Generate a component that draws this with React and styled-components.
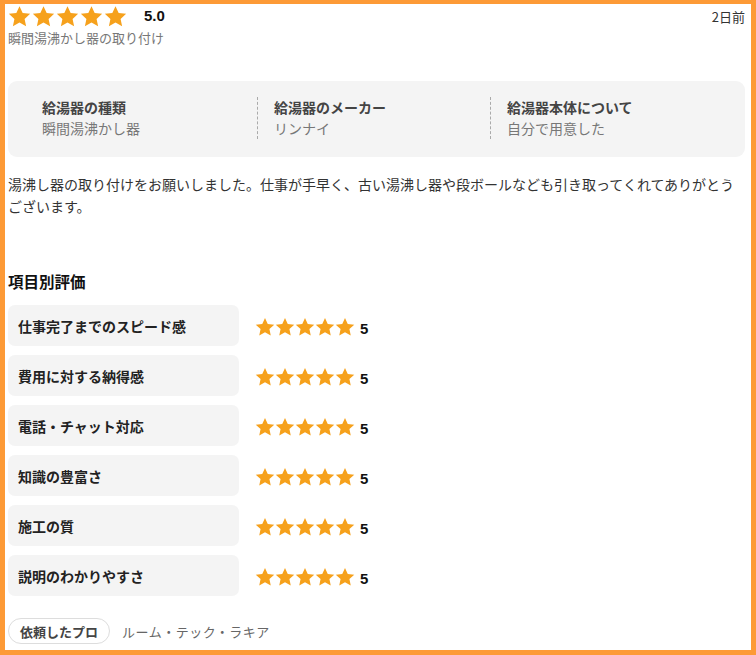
import React from "react";
import styled, { createGlobalStyle } from "styled-components";

const Global = createGlobalStyle`
  html, body { margin: 0; padding: 0; background: #fff; }
  body { font-family: "Noto Sans CJK JP", "Noto Sans", sans-serif; color: #333; }
  * { box-sizing: border-box; }
`;

const Frame = styled.div`
  width: 756px;
  height: 655px;
  border-style: solid;
  border-color: #fd9a36;
  border-width: 4px 5px 5px 5px;
  padding: 1px 6px 0 3px;
  overflow: hidden;
`;

const HeaderRow = styled.div`
  display: flex;
  align-items: flex-start;
  justify-content: space-between;
  height: 24px;
`;

const ScoreGroup = styled.div`
  display: flex;
  align-items: center;
  gap: 17px;
`;

const Stars = styled.div`
  display: flex;
  gap: ${(p) => p.$gap}px;
`;

const Score = styled.span`
  font-family: "Liberation Sans", Arial, sans-serif;
  font-weight: 700;
  font-size: 15px;
  color: #111;
  margin-top: -3px;
`;

const Date = styled.span`
  font-size: 13px;
  color: #333;
  line-height: 18px;
  margin-top: 3px;
`;

const Subtitle = styled.div`
  font-size: 13px;
  color: #777;
  line-height: 18px;
`;

const InfoBox = styled.div`
  margin-top: 34px;
  background: #f4f4f4;
  border-radius: 9px;
  padding: 16px 22px 18px 16px;
  display: grid;
  grid-template-columns: repeat(3, 1fr);
`;

const InfoCol = styled.div`
  padding-left: ${(p) => (p.$first ? 18 : 16)}px;
  border-left: ${(p) => (p.$first ? "none" : "1px dashed #aaa")};
  display: flex;
  flex-direction: column;
`;

const InfoTitle = styled.div`
  font-size: 14px;
  font-weight: 700;
  color: #444;
  line-height: 21px;
`;

const InfoValue = styled.div`
  font-size: 14px;
  color: #777;
  line-height: 21px;
`;

const Review = styled.p`
  margin: 16px 0 0;
  font-size: 14px;
  line-height: 22px;
  color: #333;
`;

const SectionTitle = styled.h3`
  margin: 52px 0 0;
  font-size: 15.5px;
  font-weight: 700;
  line-height: 24px;
  color: #111;
`;

const RatingList = styled.div`
  margin-top: 12px;
  display: flex;
  flex-direction: column;
  gap: 9px;
`;

const RatingRow = styled.div`
  display: flex;
  align-items: center;
  gap: 16px;
`;

const Label = styled.div`
  width: 231px;
  height: 41px;
  background: #f4f4f4;
  border-radius: 7px;
  padding: 0 10px;
  display: flex;
  align-items: center;
  font-size: 14px;
  font-weight: 700;
  color: #222;
`;

const RatingValue = styled.div`
  display: flex;
  align-items: center;
  gap: 5px;
  margin-top: 2px;
`;

const Num = styled.span`
  font-family: "Liberation Sans", Arial, sans-serif;
  font-weight: 700;
  font-size: 15px;
  color: #111;
  margin-top: 4px;
`;

const Footer = styled.div`
  margin-top: 22px;
  display: flex;
  align-items: center;
  gap: 12px;
`;

const Pill = styled.span`
  height: 26px;
  padding: 0 11px;
  border: 1px solid #ddd;
  border-radius: 13px;
  display: inline-flex;
  align-items: center;
  font-size: 13px;
  font-weight: 700;
  color: #444;
`;

const ProName = styled.span`
  font-size: 13px;
  color: #666;
  letter-spacing: 0.5px;
`;

const Star = ({ size }) => (
  <svg width={size} height={size} viewBox="0 0 24 24">
    <path
      fill="#f6a11c"
      d="M12 1.2l3.3 7.1 7.8.9-5.8 5.3 1.6 7.7L12 18.3l-6.9 3.9 1.6-7.7L.9 9.2l7.8-.9z"
    />
  </svg>
);

const StarSet = ({ size, gap }) => (
  <Stars $gap={gap}>
    {[0, 1, 2, 3, 4].map((i) => (
      <Star key={i} size={size} />
    ))}
  </Stars>
);

const info = [
  ["給湯器の種類", "瞬間湯沸かし器"],
  ["給湯器のメーカー", "リンナイ"],
  ["給湯器本体について", "自分で用意した"],
];

const ratings = [
  "仕事完了までのスピード感",
  "費用に対する納得感",
  "電話・チャット対応",
  "知識の豊富さ",
  "施工の質",
  "説明のわかりやすさ",
];

export default function App() {
  return (
    <>
      <Global />
      <Frame>
        <HeaderRow>
          <ScoreGroup>
            <StarSet size={23} gap={1} />
            <Score>5.0</Score>
          </ScoreGroup>
          <Date>2日前</Date>
        </HeaderRow>
        <Subtitle>瞬間湯沸かし器の取り付け</Subtitle>
        <InfoBox>
          {info.map(([t, v], i) => (
            <InfoCol key={t} $first={i === 0}>
              <InfoTitle>{t}</InfoTitle>
              <InfoValue>{v}</InfoValue>
            </InfoCol>
          ))}
        </InfoBox>
        <Review>
          湯沸し器の取り付けをお願いしました。仕事が手早く、古い湯沸し器や段ボールなども引き取ってくれてありがとうございます。
        </Review>
        <SectionTitle>項目別評価</SectionTitle>
        <RatingList>
          {ratings.map((r) => (
            <RatingRow key={r}>
              <Label>{r}</Label>
              <RatingValue>
                <StarSet size={20} gap={0} />
                <Num>5</Num>
              </RatingValue>
            </RatingRow>
          ))}
        </RatingList>
        <Footer>
          <Pill>依頼したプロ</Pill>
          <ProName>ルーム・テック・ラキア</ProName>
        </Footer>
      </Frame>
    </>
  );
}
